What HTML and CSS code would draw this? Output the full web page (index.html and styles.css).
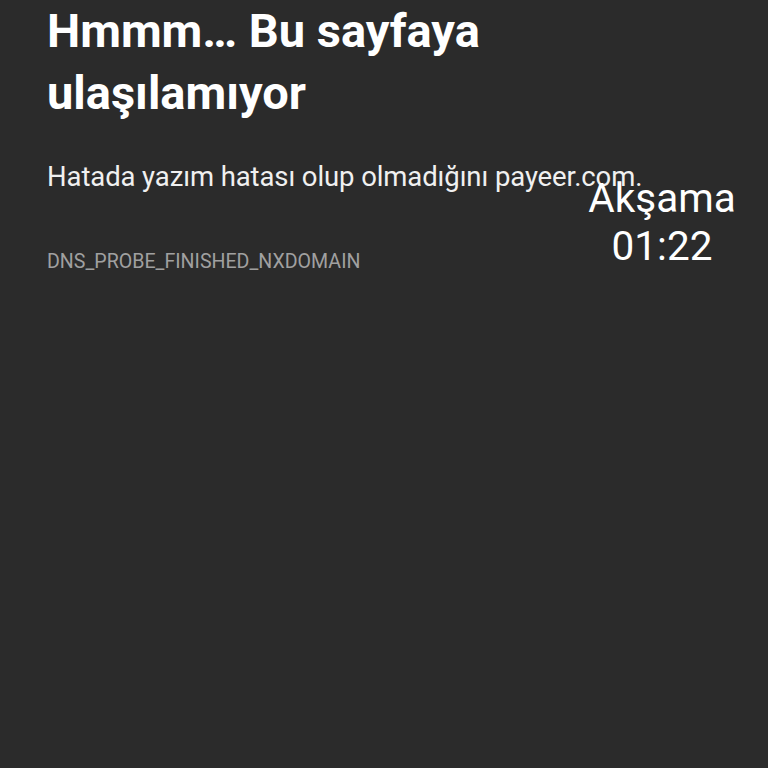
FILE: index.html
```html
<!DOCTYPE html>
<html lang="tr">
<head>
<meta charset="utf-8">
<link rel="stylesheet" href="styles.css">
</head>
<body>
<main class="page">
  <h1 class="title">Hmmm… Bu sayfaya ulaşılamıyor</h1>
  <p class="desc">Hatada yazım hatası olup olmadığını payeer.com.</p>
  <p class="code">DNS_PROBE_FINISHED_NXDOMAIN</p>
</main>
<div class="clock">
  <div class="clock-label">Akşama</div>
  <div class="clock-time">01:22</div>
</div>
</body>
</html>
```
FILE: styles.css
```css
html, body {
  margin: 0;
  padding: 0;
  background: #2b2b2b;
  width: 768px;
  height: 768px;
  overflow: hidden;
  font-family: Roboto, "Noto Sans", sans-serif;
}
.page {
  padding: 0 47px;
  display: flex;
  flex-direction: column;
}
.title {
  margin: 0;
  width: 460px;
  font-size: 47px;
  line-height: 62px;
  font-weight: 700;
  color: #ffffff;
}
.desc {
  margin: 36px 0 0;
  font-size: 27.5px;
  line-height: 34px;
  color: #f0f0f0;
  white-space: nowrap;
  letter-spacing: -0.1px;
}
.code {
  margin: 56px 0 0;
  font-size: 19.6px;
  line-height: 24px;
  color: #a0a0a0;
}
.clock {
  position: absolute;
  left: 580px;
  top: 174px;
  width: 164px;
  text-align: center;
  color: #ffffff;
  font-size: 40.5px;
  line-height: 48px;
}
```
